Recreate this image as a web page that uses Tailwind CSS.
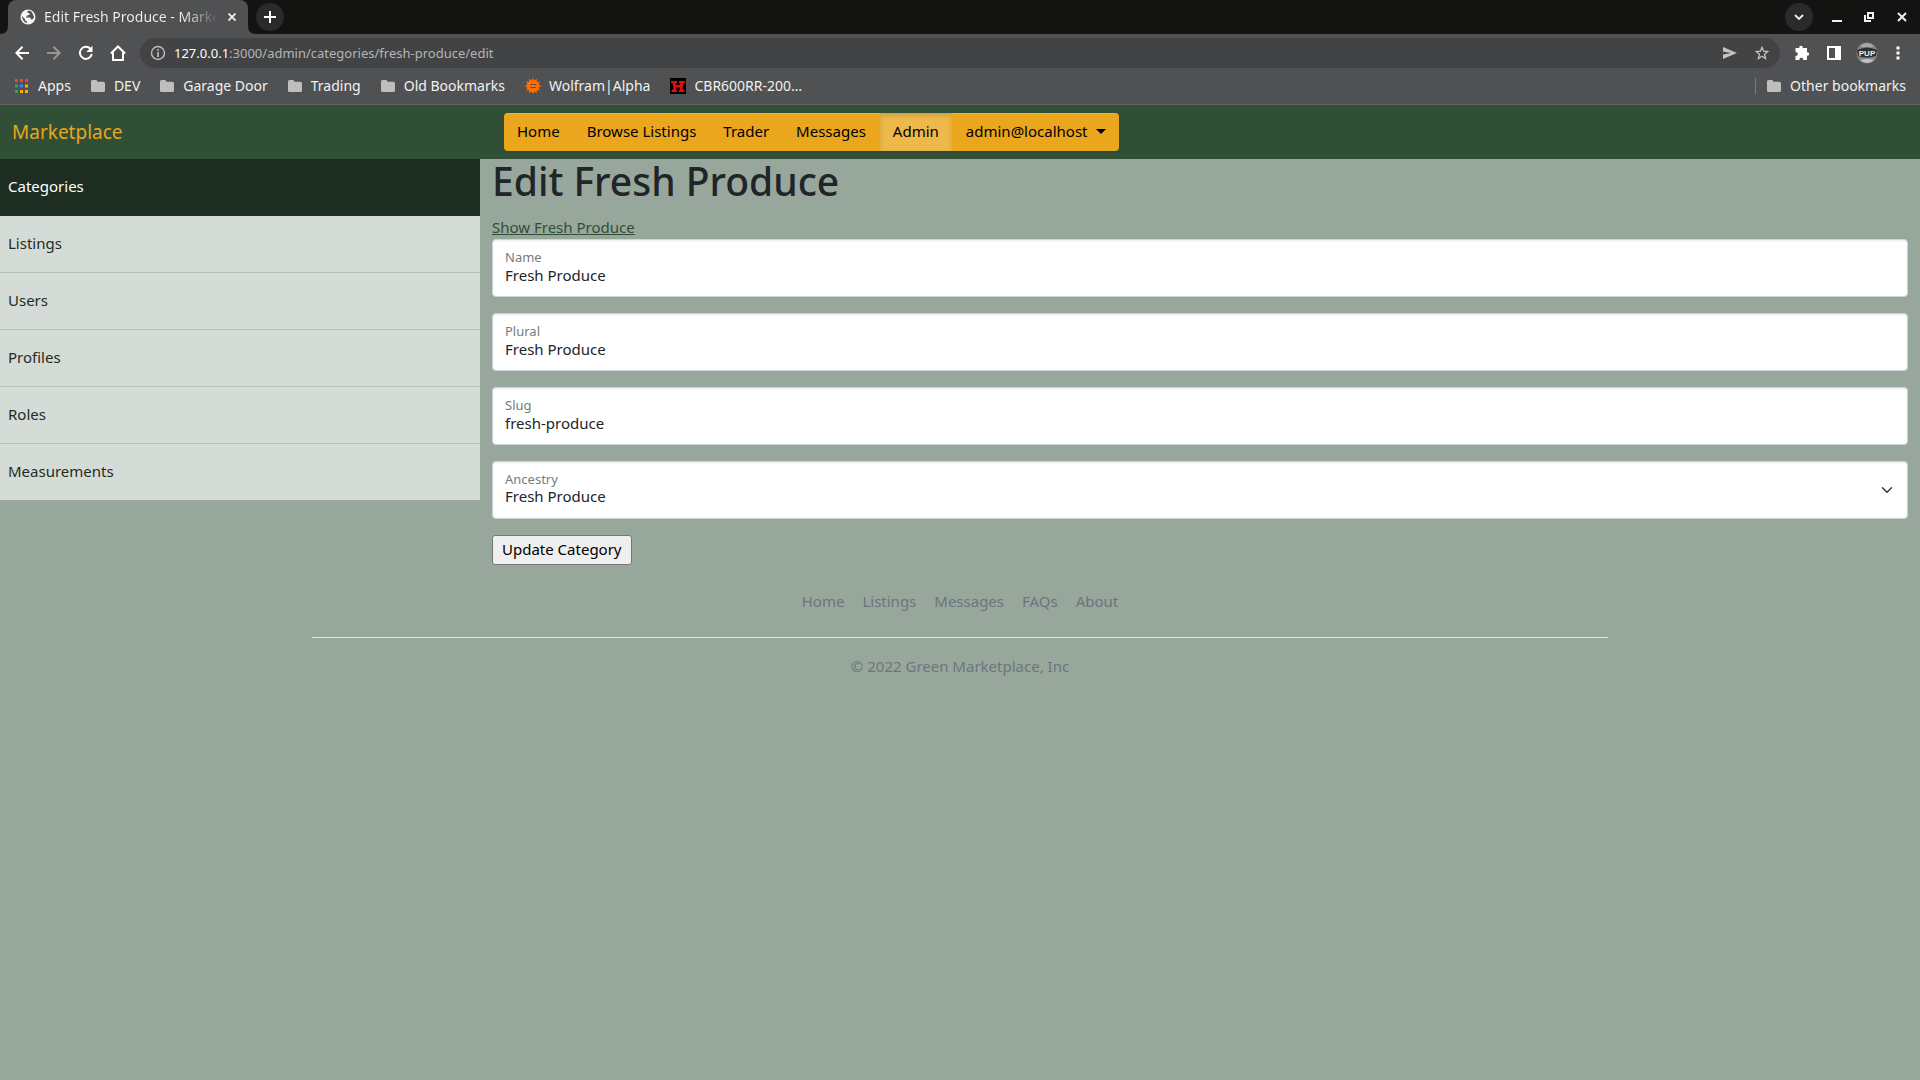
<!DOCTYPE html>
<html lang="en">
<head>
<meta charset="utf-8">
<title>Edit Fresh Produce - Marketplace</title>
<script src="https://cdn.jsdelivr.net/npm/@tailwindcss/browser@4"></script>
</head>
<body class="min-h-screen bg-[#98a79b] font-['Noto_Sans',sans-serif] text-[15px] leading-6 text-[#212529]">
<svg class="hidden"><symbol id="folder" viewBox="0 0 14 12"><path d="M1.500 0H5.300L6.800 1.700H12.500Q14 1.700 14 3.200V10.500Q14 12 12.500 12H1.500Q0 12 0 10.500V1.500Q0 0 1.500 0Z" fill="#bebebe"/></symbol></svg>

<div class="text-[14px] text-[#f1f1f1]">
  <!-- Tab strip -->
  <div class="flex h-[34px] items-center justify-between bg-[#131411]">
    <div class="flex h-full items-center">
      <svg class="w-2 h-full" viewBox="0 0 8 34"><path d="M8 26V34H0Q8 34 8 26Z" fill="#505153"/></svg>
      <div class="flex h-full w-60 items-center rounded-t-lg bg-[#505153] pl-3 pr-1.5">
        <svg class="mr-2 size-4 shrink-0" viewBox="0 0 16 16"><circle cx="8" cy="8" r="7.500" fill="#f5f5f5"/><path d="M8.500 1.500Q7 2.500 7.500 4H9.500V6H7.500V7.500H6V8.500H10Q11 9 11 10.500H12.500Q14 9 14 7.500L12.500 4.500Q12 2 8.500 1.500ZM2 7L5 10V11.500L7 12.500V14Q2.500 13 2 7Z" fill="#505153"/></svg>
        <span class="min-w-0 grow overflow-hidden whitespace-nowrap bg-linear-to-r from-[#f1f1f1] from-80% to-transparent bg-clip-text text-transparent">Edit Fresh Produce - Marketplace</span>
        <button class="ml-1 grid size-5 shrink-0 place-items-center" aria-label="Close tab"><svg class="size-2" viewBox="0 0 8 8"><path d="M.5 .5L7.500 7.500M7.500 .5L.5 7.500" stroke="#f1f1f1" stroke-width="1.800"/></svg></button>
      </div>
      <svg class="w-2 h-full" viewBox="0 0 8 34"><path d="M0 26V34H8Q0 34 0 26Z" fill="#505153"/></svg>
      <button class="grid size-7 place-items-center rounded-full bg-[#292a2a]" aria-label="New tab"><svg class="size-3" viewBox="0 0 12 12"><path d="M6 0V12M0 6H12" stroke="#fff" stroke-width="2"/></svg></button>
    </div>
    <div class="flex items-center pr-[13px]">
      <button class="mr-[19px] grid size-7 place-items-center rounded-full bg-[#292a2a]" aria-label="Search tabs"><svg class="w-2.5 h-1.5" viewBox="0 0 10 6"><path d="M1 1L5 5L9 1" fill="none" stroke="#f1f1f1" stroke-width="1.800"/></svg></button>
      <button class="mr-[22px]" aria-label="Minimise"><svg class="block size-2.5" viewBox="0 0 10 10"><path d="M0 9H10" stroke="#f1f1f1" stroke-width="2"/></svg></button>
      <button class="mr-[23px]" aria-label="Restore"><svg class="block size-2.5" viewBox="0 0 10 10"><path d="M4 1H9V6H4ZM1 3V9H7" fill="none" stroke="#f1f1f1" stroke-width="2"/></svg></button>
      <button aria-label="Close"><svg class="block size-2.5" viewBox="0 0 10 10"><path d="M1 1L9 9M9 1L1 9" stroke="#f1f1f1" stroke-width="2"/></svg></button>
    </div>
  </div>

  <!-- Toolbar -->
  <div class="flex h-[38px] items-center bg-[#505153] pl-[15px] pr-3">
    <button class="mr-[18px]" aria-label="Back"><svg class="block size-3.5" viewBox="0 0 14 14"><path d="M7.500 .7L1.400 7L7.500 13.300M1.400 7H14" fill="none" stroke="#fff" stroke-width="2"/></svg></button>
    <button class="mr-[17px]" aria-label="Forward"><svg class="block size-3.5" viewBox="0 0 14 14"><path d="M6.500 .7L12.600 7L6.500 13.300M12.600 7H0" fill="none" stroke="#969697" stroke-width="2"/></svg></button>
    <button class="mr-4" aria-label="Reload"><svg class="block size-4" viewBox="0 0 16 16"><path d="M12.500 4A6 6 0 1 0 13.800 9" fill="none" stroke="#fff" stroke-width="2"/><path d="M14.500 .8V7H8.300Z" fill="#fff"/></svg></button>
    <button class="mr-3.5" aria-label="Home page"><svg class="block size-4" viewBox="0 0 16 16"><path d="M3 7.500V15H13V7.500M.9 8.500L8 1.500L15.100 8.500" fill="none" stroke="#fff" stroke-width="2"/></svg></button>
    <div class="flex h-[30px] grow items-center rounded-full bg-[#424345] pl-2.5 pr-[11px]">
      <svg class="mr-2 size-4 shrink-0" viewBox="0 0 16 16"><circle cx="8" cy="8" r="6.500" fill="none" stroke="#bebebe" stroke-width="1.400"/><path d="M8 7V12M8 4V5.700" stroke="#bebebe" stroke-width="1.700"/></svg>
      <a href="#" class="grow text-[13px] text-[#b5b5b6]"><span class="text-white">127.0.0.1</span>:3000/admin/categories/fresh-produce/edit</a>
      <button class="mr-[18px]" aria-label="Send"><svg class="block h-3 w-3.5" viewBox="0 0 14 12"><path d="M0 0L14 6L0 12V7.500L8 6L0 4.500Z" fill="#c4c4c5"/></svg></button>
      <button aria-label="Bookmark"><svg class="block size-3.5" viewBox="0 0 14 14"><path d="M7 1.300L8.600 5.200L12.800 5.500L9.600 8.300L10.600 12.500L7 10.200L3.400 12.500L4.400 8.300L1.200 5.500L5.400 5.200Z" fill="none" stroke="#c4c4c5" stroke-width="1.300"/></svg></button>
    </div>
    <button class="ml-3.5 mr-4" aria-label="Extensions"><svg class="block size-4" viewBox="0 0 16 16"><path d="M1.500 3H5.200Q5 .8 7 .8T8.800 3H13V7.200Q15.200 7 15.200 8.900T13 10.800V15H9.200Q9.300 12.500 7.300 12.500T5.300 15H1.500V11Q3.800 11.100 3.800 9T1.500 7Z" fill="#fff"/></svg></button>
    <button class="mr-3.5" aria-label="Side panel"><svg class="block size-4" viewBox="0 0 16 16"><path d="M2 2H14V14H2Z" fill="none" stroke="#fff" stroke-width="2"/><path d="M9 2H14V14H9Z" fill="#fff"/></svg></button>
    <button class="mr-2.5" aria-label="Profile"><svg class="block size-[22px]" viewBox="0 0 22 22"><circle cx="11" cy="11" r="10.500" fill="#858585"/><path d="M4 4Q11 -2 18 4L16 5H6Z" fill="#a8a8a8"/><path d="M4 18Q11 16 18 18Q11 24 4 18Z" fill="#c2c2c2"/><path d="M1 8Q11 3 21 8L20 14Q11 17 2 14Z" fill="#303030"/><text x="11" y="14" text-anchor="middle" font-family="Liberation Sans, sans-serif" font-size="8" font-weight="700" fill="#eee">PUP</text></svg></button>
    <button class="px-1.5" aria-label="Menu"><svg class="block h-3.5 w-2" viewBox="0 0 8 14"><path d="M2.500 .5h3v3h-3zM2.500 5.500h3v3h-3zM2.500 10.500h3v3h-3z" fill="#fff"/></svg></button>
  </div>

  <!-- Bookmarks bar -->
  <div class="flex h-[33px] items-center gap-5 border-b border-[#636466] bg-[#505153] pb-1 pl-[15px] pr-3.5 whitespace-nowrap">
    <a href="#" class="flex items-center gap-2.5"><svg class="h-3.5 w-[13px]" viewBox="0 0 13 14"><path d="M0 0h3v3H0zM5 0h3v3H5zM10 0h3v3h-3z" fill="#f04438"/><path d="M0 5.500h3v3H0zM0 11h3v3H0z" fill="#34a065"/><path d="M5 5.500h3v3H5z" fill="#2f8bf5"/><path d="M10 5.500h3v3h-3zM5 11h3v3H5zM10 11h3v3h-3z" fill="#fbaf05"/></svg>Apps</a>
    <a href="#" class="flex items-center gap-[9px]"><svg class="h-3 w-3.5"><use href="#folder"/></svg>DEV</a>
    <a href="#" class="flex items-center gap-[9px]"><svg class="h-3 w-3.5"><use href="#folder"/></svg>Garage Door</a>
    <a href="#" class="flex items-center gap-[9px]"><svg class="h-3 w-3.5"><use href="#folder"/></svg>Trading</a>
    <a href="#" class="flex items-center gap-[9px]"><svg class="h-3 w-3.5"><use href="#folder"/></svg>Old Bookmarks</a>
    <a href="#" class="flex items-center gap-2"><svg class="size-4" viewBox="0 0 16 16"><path d="M8 0L9.300 2.600L11.700 .8L12 4L15 3.500L13.600 6.200L16 8L13.600 9.800L15 12.500L12 12L11.700 15.200L9.300 13.400L8 16L6.700 13.400L4.300 15.200L4 12L1 12.500L2.400 9.800L0 8L2.400 6.200L1 3.500L4 4L4.300 .8L6.700 2.600Z" fill="#ff6d00"/><path d="M5 6.500H11M5 9.500H11" stroke="#6b4e3e"/></svg>Wolfram|Alpha</a>
    <a href="#" class="flex items-center gap-2"><svg class="size-4" viewBox="0 0 16 16"><path d="M0 0H16V16H0Z" fill="#000"/><path d="M1 3H7V5H6V7H10V5H9V3H15V5H13.500L12.500 11L14.500 12V14H9V12H10V9.500H6V12H7V14H1.500V12L3.500 11L2.500 5H1Z" fill="#e00d0d"/></svg>CBR600RR-200…</a>
    <a href="#" class="ml-auto flex items-center gap-[9px]"><span class="mr-0.5 h-4 w-px bg-[#7c7d7f]"></span><svg class="h-3 w-3.5"><use href="#folder"/></svg>Other bookmarks</a>
  </div>
</div>

<!-- Site header -->
<header class="flex h-[54px] items-center bg-[#304f36]">
  <a href="#" class="w-1/4 pl-3 text-[19px] text-[#eaa61c]">Marketplace</a>
  <nav class="ml-6 flex h-[38px] gap-px overflow-hidden rounded-[4px] bg-[#eaa61c] text-black shadow-[inset_0_1px_0_rgba(255,255,255,0.15),0_1px_1px_rgba(0,0,0,0.075)] *:flex *:items-center *:px-[13px] *:pb-0.5">
    <a href="#">Home</a>
    <a href="#">Browse Listings</a>
    <a href="#">Trader</a>
    <a href="#">Messages</a>
    <a href="#" class="bg-[#eeb84a] shadow-[inset_0_3px_5px_rgba(0,0,0,0.125)]">Admin</a>
    <button class="gap-2">admin@localhost <svg class="h-[5px] w-2.5" viewBox="0 0 10 5"><path d="M0 0H10L5 5Z"/></svg></button>
  </nav>
</header>

<div class="flex items-start">
  <aside class="w-1/4 text-[#1e2d22]">
    <a href="#" class="block bg-[#1e2d22] px-2 pt-[15px] pb-[18px] text-white">Categories</a>
    <a href="#" class="block border-b border-[#b8c0ba] bg-[#d5dbd7] px-2 pt-[15px] pb-[17px]">Listings</a>
    <a href="#" class="block border-b border-[#b8c0ba] bg-[#d5dbd7] px-2 pt-[15px] pb-[17px]">Users</a>
    <a href="#" class="block border-b border-[#b8c0ba] bg-[#d5dbd7] px-2 pt-[15px] pb-[17px]">Profiles</a>
    <a href="#" class="block border-b border-[#b8c0ba] bg-[#d5dbd7] px-2 pt-[15px] pb-[17px]">Roles</a>
    <a href="#" class="block bg-[#d5dbd7] px-2 pt-[15px] pb-[17px]">Measurements</a>
  </aside>
  <main class="w-3/4 px-3">
    <h1 class="mb-3 text-[39px] leading-11 font-medium">Edit Fresh Produce</h1>
    <a href="#" class="block text-[#304f36] underline">Show Fresh Produce</a>
    <form class="flex flex-col items-start gap-4">
      <div class="relative w-full">
        <label for="name" class="absolute top-2.5 left-[13px] text-[13px] leading-4 text-[#787b7e]">Name</label>
        <input id="name" value="Fresh Produce" class="block h-[58px] w-full rounded-[4px] border border-[#ced4da] bg-white px-3 pt-6 pb-2.5 leading-6 shadow-[inset_0_1px_2px_rgba(0,0,0,0.075)]">
      </div>
      <div class="relative w-full">
        <label for="plural" class="absolute top-2.5 left-[13px] text-[13px] leading-4 text-[#787b7e]">Plural</label>
        <input id="plural" value="Fresh Produce" class="block h-[58px] w-full rounded-[4px] border border-[#ced4da] bg-white px-3 pt-6 pb-2.5 leading-6 shadow-[inset_0_1px_2px_rgba(0,0,0,0.075)]">
      </div>
      <div class="relative w-full">
        <label for="slug" class="absolute top-2.5 left-[13px] text-[13px] leading-4 text-[#787b7e]">Slug</label>
        <input id="slug" value="fresh-produce" class="block h-[58px] w-full rounded-[4px] border border-[#ced4da] bg-white px-3 pt-6 pb-2.5 leading-6 shadow-[inset_0_1px_2px_rgba(0,0,0,0.075)]">
      </div>
      <div class="relative w-full">
        <label for="ancestry" class="absolute top-2.5 left-[13px] text-[13px] leading-4 text-[#787b7e]">Ancestry</label>
        <select id="ancestry" class="block h-[58px] w-full appearance-none rounded-[4px] border border-[#ced4da] bg-white px-3 pt-[22px] pb-2.5 leading-6 shadow-[inset_0_1px_2px_rgba(0,0,0,0.075)]"><option>Fresh Produce</option></select>
        <svg class="pointer-events-none absolute top-[23px] right-[15px] size-3" viewBox="0 0 16 16"><path d="M2 5l6 6 6-6" fill="none" stroke="#343a40" stroke-width="2" stroke-linecap="round" stroke-linejoin="round"/></svg>
      </div>
      <button type="button" class="h-[30px] rounded-[3px] border border-[#767676] bg-[#efefef] px-[9px] pb-0.5 text-black">Update Category</button>
    </form>
  </main>
</div>

<footer class="mx-auto max-w-[1320px] px-3 pt-6 text-center text-[#6c757d]">
  <nav class="flex justify-center gap-[18px] border-b border-[#dee2e6] pb-6">
    <a href="#">Home</a><a href="#">Listings</a><a href="#">Messages</a><a href="#">FAQs</a><a href="#">About</a>
  </nav>
  <p class="pt-4">© 2022 Green Marketplace, Inc</p>
</footer>
</body>
</html>
